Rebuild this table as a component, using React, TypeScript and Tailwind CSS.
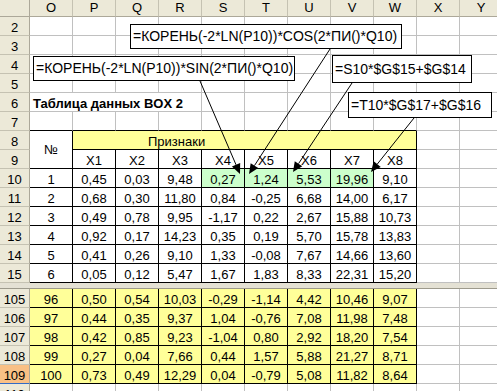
import React from 'react';

const COLS = ['O', 'P', 'Q', 'R', 'S', 'T', 'U', 'V', 'W', 'X', 'Y'];

const DATA: Record<number, string[]> = {
  10: ['1', '0,45', '0,03', '9,48', '0,27', '1,24', '5,53', '19,96', '9,10'],
  11: ['2', '0,68', '0,30', '11,80', '0,84', '-0,25', '6,68', '14,00', '6,17'],
  12: ['3', '0,49', '0,78', '9,95', '-1,17', '0,22', '2,67', '15,88', '10,73'],
  13: ['4', '0,92', '0,17', '14,23', '0,35', '0,19', '5,70', '15,78', '13,83'],
  14: ['5', '0,41', '0,26', '9,10', '1,33', '-0,08', '7,67', '14,66', '13,60'],
  15: ['6', '0,05', '0,12', '5,47', '1,67', '1,83', '8,33', '22,31', '15,20'],
  105: ['96', '0,50', '0,54', '10,03', '-0,29', '-1,14', '4,42', '10,46', '9,07'],
  106: ['97', '0,44', '0,35', '9,37', '1,04', '-0,76', '7,08', '11,98', '7,48'],
  107: ['98', '0,42', '0,85', '9,23', '-1,04', '0,80', '2,92', '18,20', '7,54'],
  108: ['99', '0,27', '0,04', '7,66', '0,44', '1,57', '5,88', '21,27', '8,71'],
  109: ['100', '0,73', '0,49', '12,29', '0,04', '-0,79', '5,08', '11,82', '8,64'],
};

// O..W (0..8) on rows 8-15 and 105-109 carry the black table borders
const inTable = (r: number, c: number) =>
  c >= 0 && c <= 8 && ((r >= 8 && r <= 15) || (r >= 105 && r <= 109));

const nextRow = (r: number) => (r === 15 ? 0 : r + 1);

function edges(r: number, c: number, spanC = 1, lastR = r) {
  const right = inTable(r, c + spanC - 1) || inTable(r, c + spanC) ? 'border-r-black' : 'border-r-[#c0c0c0]';
  const bottom = inTable(lastR, c) || inTable(nextRow(lastR), c) ? 'border-b-black' : 'border-b-[#c0c0c0]';
  return `border-r border-b ${right} ${bottom}`;
}

function RowHead({ r }: { r: number }) {
  const sel = r === 109;
  return (
    <div
      className={`flex items-end justify-center leading-[15px] border-r border-b ${
        sel ? 'bg-[#f9c085] border-b-[#316ac5] border-r-[#aca899]' : 'bg-[#ece9d8] border-b-[#c5c2b2] border-r-[#aca899]'
      }`}
    >
      {r}
    </div>
  );
}

function Row({ r }: { r: number }) {
  const vals = DATA[r];
  return (
    <>
      <RowHead r={r} />
      {COLS.map((_, c) => {
        const green = r === 10 && c >= 4 && c <= 7;
        const yellow = r >= 105 && r <= 109 && c <= 8;
        const bg = green ? 'bg-[#ccffcc]' : yellow ? 'bg-[#ffff99]' : '';
        return (
          <div key={c} className={`flex items-end justify-center leading-[15px] whitespace-nowrap ${edges(r, c)} ${bg}`}>
            {vals && c <= 8 ? vals[c] : ''}
          </div>
        );
      })}
    </>
  );
}

function Arrow({ x1, y1, x2, y2 }: { x1: number; y1: number; x2: number; y2: number }) {
  const dx = x2 - x1;
  const dy = y2 - y1;
  const len = Math.hypot(dx, dy);
  const ux = dx / len;
  const uy = dy / len;
  const bx = x2 - ux * 10;
  const by = y2 - uy * 10;
  const pts = `${x2},${y2} ${bx - uy * 4.5},${by + ux * 4.5} ${bx + uy * 4.5},${by - ux * 4.5}`;
  return (
    <g>
      <line x1={x1} y1={y1} x2={bx} y2={by} stroke="black" strokeWidth={1} />
      <polygon points={pts} fill="black" />
    </g>
  );
}

export default function App() {
  return (
    <div className="relative w-[497px] h-[391px] overflow-hidden bg-white text-black text-[13px] font-['Liberation_Sans',Arial,sans-serif]">
      <div className="grid grid-cols-[30px_repeat(11,43px)] grid-rows-[17px] auto-rows-[19px]">
        {/* column headers */}
        <div className="bg-[#ece9d8] border-r border-b border-r-[#aca899] border-b-[#aca899]" />
        {COLS.map((l) => (
          <div
            key={l}
            className="flex items-end justify-center leading-[16px] bg-[#ece9d8] border-r border-b border-r-[#c5c2b2] border-b-[#aca899]"
          >
            {l}
          </div>
        ))}

        {[2, 3, 4, 5].map((r) => (
          <Row key={r} r={r} />
        ))}

        {/* row 6: title spills over O:R */}
        <RowHead r={6} />
        <div className={`col-span-4 flex items-end pl-[3px] leading-[15px] font-bold whitespace-nowrap ${edges(6, 3)}`}>
          Таблица данных BOX 2
        </div>
        {[4, 5, 6, 7, 8, 9, 10].map((c) => (
          <div key={c} className={edges(6, c)} />
        ))}

        <Row r={7} />

        {/* rows 8-9: merged headers */}
        <RowHead r={8} />
        <div className={`row-span-2 flex items-center justify-center ${edges(8, 0, 1, 9)}`}>№</div>
        <div className={`col-span-8 flex items-end pl-[75px] leading-[15px] bg-[#ffff99] whitespace-nowrap ${edges(8, 1, 8)}`}>
          Признаки
        </div>
        <div className={edges(8, 9)} />
        <div className={edges(8, 10)} />

        <RowHead r={9} />
        {[1, 2, 3, 4, 5, 6, 7, 8].map((c) => (
          <div key={c} className={`flex items-end justify-center leading-[15px] ${edges(9, c)}`}>
            X{c}
          </div>
        ))}
        <div className={edges(9, 9)} />
        <div className={edges(9, 10)} />

        {[10, 11, 12, 13, 14, 15].map((r) => (
          <Row key={r} r={r} />
        ))}
      </div>

      {/* frozen split band */}
      <div className="h-[6px] bg-[#e4e1d4] border-b border-b-[#9d9a8c]" />

      <div className="grid grid-cols-[30px_repeat(11,43px)] auto-rows-[19px]">
        {[105, 106, 107, 108, 109, 110].map((r) => (
          <Row key={r} r={r} />
        ))}
      </div>

      {/* comment callouts */}
      <div className="absolute left-[130px] top-[24px] w-[272px] h-[25px] flex items-center pl-[2px] bg-white border border-black text-[14px] whitespace-nowrap">
        =КОРЕНЬ(-2*LN(P10))*COS(2*ПИ()*Q10)
      </div>
      <div className="absolute left-[33px] top-[56px] w-[262px] h-[25px] flex items-center pl-[2px] bg-white border border-black text-[14px] whitespace-nowrap">
        =КОРЕНЬ(-2*LN(P10))*SIN(2*ПИ()*Q10)
      </div>
      <div className="absolute left-[332px] top-[55px] w-[140px] h-[28px] flex items-center pl-[2px] bg-white border border-black text-[14px] whitespace-nowrap">
        =S10*$G$15+$G$14
      </div>
      <div className="absolute left-[348px] top-[92px] w-[144px] h-[26px] flex items-center pl-[2px] bg-white border border-black text-[14px] whitespace-nowrap">
        =T10*$G$17+$G$16
      </div>

      <svg className="absolute inset-0 pointer-events-none" width={497} height={391}>
        <Arrow x1={200} y1={81} x2={240} y2={174} />
        <Arrow x1={330} y1={49} x2={249} y2={174} />
        <Arrow x1={352} y1={83} x2={293} y2={172} />
        <Arrow x1={414} y1={118} x2={371} y2={172} />
      </svg>
    </div>
  );
}
